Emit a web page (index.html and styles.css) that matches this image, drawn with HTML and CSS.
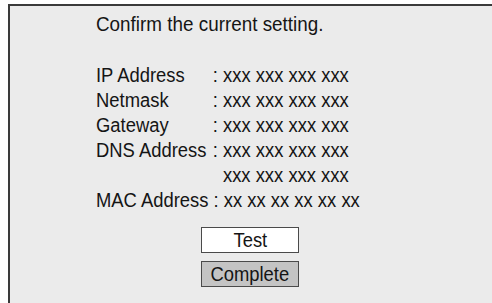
FILE: index.html
```html
<!DOCTYPE html>
<html lang="en">
<head>
    <meta charset="UTF-8">
    <title>Network Setting</title>
    <link rel="stylesheet" href="styles.css">
</head>
<body>
    <div class="panel">
        <div class="text">
            <p class="title">Confirm the current setting.</p>

            <div class="settings">
                <div class="row"><span class="label">IP Address</span><span class="value">: xxx xxx xxx xxx</span></div>
                <div class="row"><span class="label">Netmask</span><span class="value">: xxx xxx xxx xxx</span></div>
                <div class="row"><span class="label">Gateway</span><span class="value">: xxx xxx xxx xxx</span></div>
                <div class="row"><span class="label">DNS Address</span><span class="value">: xxx xxx xxx xxx</span></div>
                <div class="row"><span class="label"></span><span class="value indent">xxx xxx xxx xxx</span></div>
                <div class="row"><span class="value">MAC Address : xx xx xx xx xx xx</span></div>
            </div>
        </div>

        <div class="buttons">
            <button class="btn"><span class="btn-text">Test</span></button>
            <button class="btn btn-active"><span class="btn-text">Complete</span></button>
        </div>
    </div>
</body>
</html>
```

FILE: styles.css
```css
* {
    box-sizing: border-box;
    margin: 0;
    padding: 0;
}

html, body {
    height: 100%;
}

body {
    background-color: #ffffff;
    color: #151515;
    font-family: "Liberation Sans", Arial, sans-serif;
    font-size: 20px;
    line-height: 25px;
    padding: 4px 0 0 8px;
    overflow: hidden;
}

.panel {
    height: 100%;
    background-color: #ebebeb;
    border-top: 2px solid #3a3a3a;
    border-left: 2px solid #3a3a3a;
    padding: 6px 0 0 86px;
}

.text {
    transform: scaleX(0.92);
    transform-origin: left top;
    white-space: nowrap;
}

.title {
    font-size: 20.5px;
    line-height: 24px;
    margin-bottom: 27px;
}

.settings {
    display: flex;
    flex-direction: column;
}

.row {
    display: flex;
}

.label {
    width: 127px;
    flex-shrink: 0;
}

.value {
    white-space: pre;
}

.indent {
    padding-left: 11px;
}

.buttons {
    display: flex;
    flex-direction: column;
    align-items: flex-start;
    gap: 8px;
    margin: 14px 0 0 105px;
}

.btn {
    display: flex;
    justify-content: center;
    align-items: center;
    width: 98px;
    height: 26px;
    font-family: inherit;
    font-size: 20px;
    line-height: 24px;
    color: #151515;
    background-color: #ffffff;
    border: 1px solid #4a4a4a;
    border-radius: 0;
}

.btn-text {
    display: inline-block;
    transform: scaleX(0.92);
}

.btn-active {
    background-color: #c4c4c4;
}
```
